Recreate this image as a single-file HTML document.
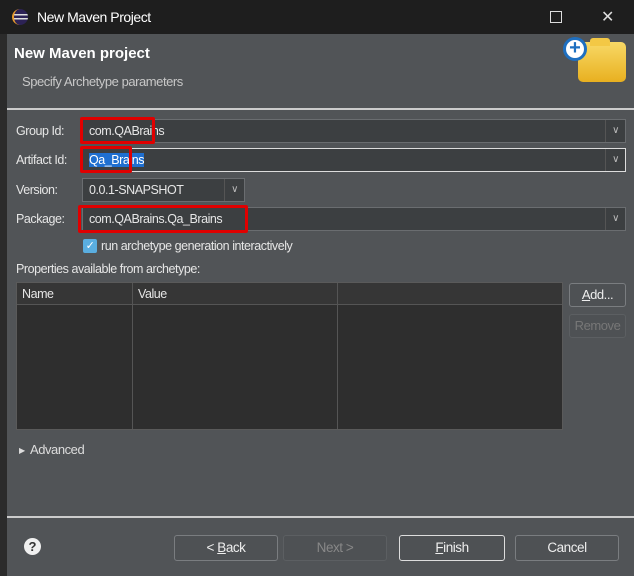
<!DOCTYPE html>
<html><head><style>
*{box-sizing:border-box;margin:0;padding:0}
body{width:634px;height:576px;background:#2b2b2b;position:relative;overflow:hidden;font-family:"Liberation Sans",sans-serif;font-size:12.5px;letter-spacing:-0.45px;color:#e6e6e6}
.a{position:absolute}
.combo{position:absolute;background:#3c3f41;border:1px solid #6a6d70;height:24px}
.combo .t{position:absolute;left:6px;top:4px}
.combo .dd{position:absolute;right:0;top:0;width:20px;height:22px;border-left:1px solid #555;color:#bbb;font-size:10px;text-align:center;line-height:22px}
.red{position:absolute;border:3px solid #e00000;border-radius:2px}
.btn{position:absolute;height:26px;border:1px solid #7a7d80;border-radius:3px;background:#4e5154;text-align:center;line-height:24px;color:#eee;font-size:13.5px}
</style></head><body>
<div class="a" style="left:0;top:0;width:634px;height:34px;background:#1e1e1e"></div>
<div class="a" style="left:12px;top:9px;width:16px;height:16px;border-radius:50%;background:linear-gradient(#2c2255 0 30%,#ddd 30% 40%,#2c2255 40% 55%,#ddd 55% 65%,#2c2255 65%);border-left:2px solid #e89a2c"></div>
<div class="a" style="left:37px;top:9px;font-size:14px;color:#fff">New Maven Project</div>
<div class="a" style="left:550px;top:11px;width:12px;height:12px;border:1.5px solid #ddd"></div>
<div class="a" style="left:601px;top:7px;font-size:16px;color:#ddd">✕</div>
<div class="a" style="left:7px;top:34px;width:627px;height:542px;background:#515457"></div>
<div class="a" style="left:14px;top:45px;font-size:15px;letter-spacing:0;font-weight:bold;color:#fff">New Maven project</div>
<div class="a" style="left:22px;top:74px;color:#c8c8c8;font-size:13px">Specify Archetype parameters</div>
<div class="a" style="left:578px;top:42px;width:48px;height:40px;border-radius:5px;background:linear-gradient(#f8d966,#e8b020)"></div>
<div class="a" style="left:590px;top:38px;width:20px;height:8px;border-radius:3px 3px 0 0;background:#f3c845"></div>
<div class="a" style="left:563px;top:37px;width:24px;height:24px;border-radius:50%;background:#fff;border:3px solid #1e6fc0;color:#1e6fc0;font-weight:bold;font-size:20px;line-height:17px;text-align:center;letter-spacing:0">+</div>
<div class="a" style="left:7px;top:108px;width:627px;height:2px;background:#ccc"></div>
<div class="a" style="left:16px;top:124px">Group Id:</div>
<div class="combo" style="left:82px;top:119px;width:544px"><span class="t">com.QABrains</span><span class="dd">∨</span></div>
<div class="red" style="left:80px;top:117px;width:75px;height:27px"></div>
<div class="a" style="left:16px;top:153px">Artifact Id:</div>
<div class="combo" style="left:82px;top:148px;width:544px;border-color:#ddd"><span class="t" style="background:#1f6fd0;color:#fff">Qa_Brains</span><span class="dd">∨</span></div>
<div class="red" style="left:80px;top:146px;width:52px;height:27px"></div>
<div class="a" style="left:16px;top:183px">Version:</div>
<div class="combo" style="left:82px;top:178px;width:163px"><span class="t">0.0.1-SNAPSHOT</span><span class="dd">∨</span></div>
<div class="a" style="left:16px;top:212px">Package:</div>
<div class="combo" style="left:82px;top:207px;width:544px"><span class="t">com.QABrains.Qa_Brains</span><span class="dd">∨</span></div>
<div class="red" style="left:78px;top:205px;width:170px;height:28px"></div>
<div class="a" style="left:83px;top:239px;width:14px;height:14px;background:#5aaee0;border-radius:2px;color:#fff;font-size:11px;line-height:14px;text-align:center">✓</div>
<div class="a" style="left:101px;top:239px">run archetype generation interactively</div>
<div class="a" style="left:16px;top:262px">Properties available from archetype:</div>
<div class="a" style="left:16px;top:282px;width:547px;height:148px;background:#2e2e2e;border:1px solid #5a5a5a"></div>
<div class="a" style="left:17px;top:283px;width:545px;height:22px;background:#363636;border-bottom:1px solid #555"></div>
<div class="a" style="left:132px;top:283px;width:1px;height:146px;background:#555"></div>
<div class="a" style="left:337px;top:283px;width:1px;height:146px;background:#555"></div>
<div class="a" style="left:22px;top:287px">Name</div>
<div class="a" style="left:138px;top:287px">Value</div>
<div class="btn" style="left:569px;top:283px;width:57px;height:24px;line-height:22px;font-size:13px"><u>A</u>dd...</div>
<div class="btn" style="left:569px;top:314px;width:57px;height:24px;line-height:22px;font-size:13px;color:#777;border-color:#5c5f62">Remove</div>
<div class="a" style="left:19px;top:446px;font-size:8px;color:#ddd">▶</div>
<div class="a" style="left:30px;top:442px;color:#ddd;font-size:13px">Advanced</div>
<div class="a" style="left:7px;top:516px;width:627px;height:2px;background:#ccc"></div>
<div class="a" style="left:24px;top:538px;width:17px;height:17px;border-radius:50%;background:#f0f0f0;color:#333;font-weight:bold;font-size:13px;line-height:17px;text-align:center;letter-spacing:0">?</div>
<div class="btn" style="left:174px;top:535px;width:104px">&lt; <u>B</u>ack</div>
<div class="btn" style="left:283px;top:535px;width:104px;color:#888;border-color:#5c5f62">Next &gt;</div>
<div class="btn" style="left:399px;top:535px;width:106px;border-color:#ddd"><u>F</u>inish</div>
<div class="btn" style="left:515px;top:535px;width:104px">Cancel</div>
</body></html>
